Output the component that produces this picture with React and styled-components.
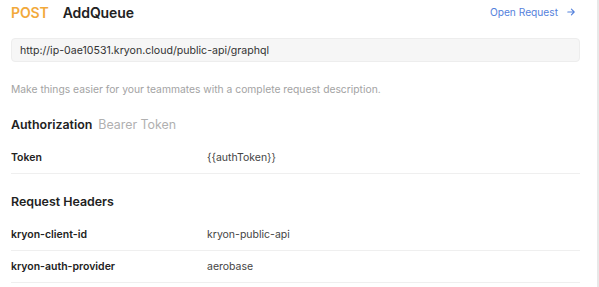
import styled, { createGlobalStyle } from "styled-components";

const GlobalStyle = createGlobalStyle`
  html, body {
    margin: 0;
    padding: 0;
    background: #ffffff;
    font-family: Inter, "Noto Sans", sans-serif;
  }
`;

const Page = styled.main`
  width: 599px;
  height: 287px;
  box-sizing: border-box;
  border-right: 2px solid #e8e8e8;
  padding: 3px 17px 0 11px;
  overflow: hidden;
`;

const Header = styled.header`
  display: flex;
  align-items: center;
  justify-content: space-between;
  height: 18px;
`;

const Title = styled.div`
  display: flex;
  align-items: baseline;
  gap: 14px;
  font-size: 14px;
  font-weight: 600;
  letter-spacing: -0.1px;
`;

const Method = styled.span`
  color: #f2a93b;
`;

const Name = styled.span`
  color: #222222;
`;

const OpenLink = styled.a`
  display: flex;
  align-items: center;
  gap: 9px;
  color: #5582dc;
  font-size: 10.2px;
  text-decoration: none;
  margin-right: 5px;
`;

const UrlBox = styled.div`
  margin-top: 17px;
  height: 24px;
  box-sizing: border-box;
  display: flex;
  align-items: center;
  padding: 0 8px;
  background: #f6f6f6;
  border: 1px solid #ededed;
  border-radius: 4px;
  font-size: 10.6px;
  color: #333333;
`;

const Description = styled.p`
  margin: 20px 0 0;
  font-size: 10.3px;
  line-height: 14px;
  color: #a3a3a3;
`;

const SectionTitle = styled.h2`
  margin: ${(p) => p.$top}px 0 0;
  display: flex;
  align-items: baseline;
  gap: 6px;
  font-size: 12.4px;
  line-height: 16px;
  font-weight: 600;
  color: #222222;
`;

const SubTitle = styled.span`
  font-weight: 400;
  color: #b0b0b0;
`;

const Row = styled.div`
  display: grid;
  grid-template-columns: 196px 1fr;
  align-items: center;
  height: 32px;
  box-sizing: border-box;
  border-bottom: 1px solid #efefef;
  font-size: 10.5px;
  margin-top: ${(p) => p.$top || 0}px;
`;

const Key = styled.span`
  font-weight: 600;
  color: #222222;
`;

const Value = styled.span`
  color: #444444;
`;

const Arrow = () => (
  <svg width="8" height="8" viewBox="0 0 10 10" fill="none" stroke="currentColor" strokeWidth="1.4" strokeLinecap="round" strokeLinejoin="round">
    <path d="M1 5h8M5.5 1.5 9 5l-3.5 3.5" />
  </svg>
);

const headers = [
  ["kryon-client-id", "kryon-public-api"],
  ["kryon-auth-provider", "aerobase"],
];

export default function App() {
  return (
    <>
      <GlobalStyle />
      <Page>
        <Header>
          <Title>
            <Method>POST</Method>
            <Name>AddQueue</Name>
          </Title>
          <OpenLink href="#">
            Open Request <Arrow />
          </OpenLink>
        </Header>
        <UrlBox>http://ip-0ae10531.kryon.cloud/public-api/graphql</UrlBox>
        <Description>
          Make things easier for your teammates with a complete request description.
        </Description>
        <SectionTitle $top={21}>
          Authorization <SubTitle>Bearer Token</SubTitle>
        </SectionTitle>
        <Row $top={9}>
          <Key>Token</Key>
          <Value>{"{{authToken}}"}</Value>
        </Row>
        <SectionTitle $top={20}>Request Headers</SectionTitle>
        {headers.map(([k, v], i) => (
          <Row key={k} $top={i === 0 ? 9 : 0}>
            <Key>{k}</Key>
            <Value>{v}</Value>
          </Row>
        ))}
      </Page>
    </>
  );
}
